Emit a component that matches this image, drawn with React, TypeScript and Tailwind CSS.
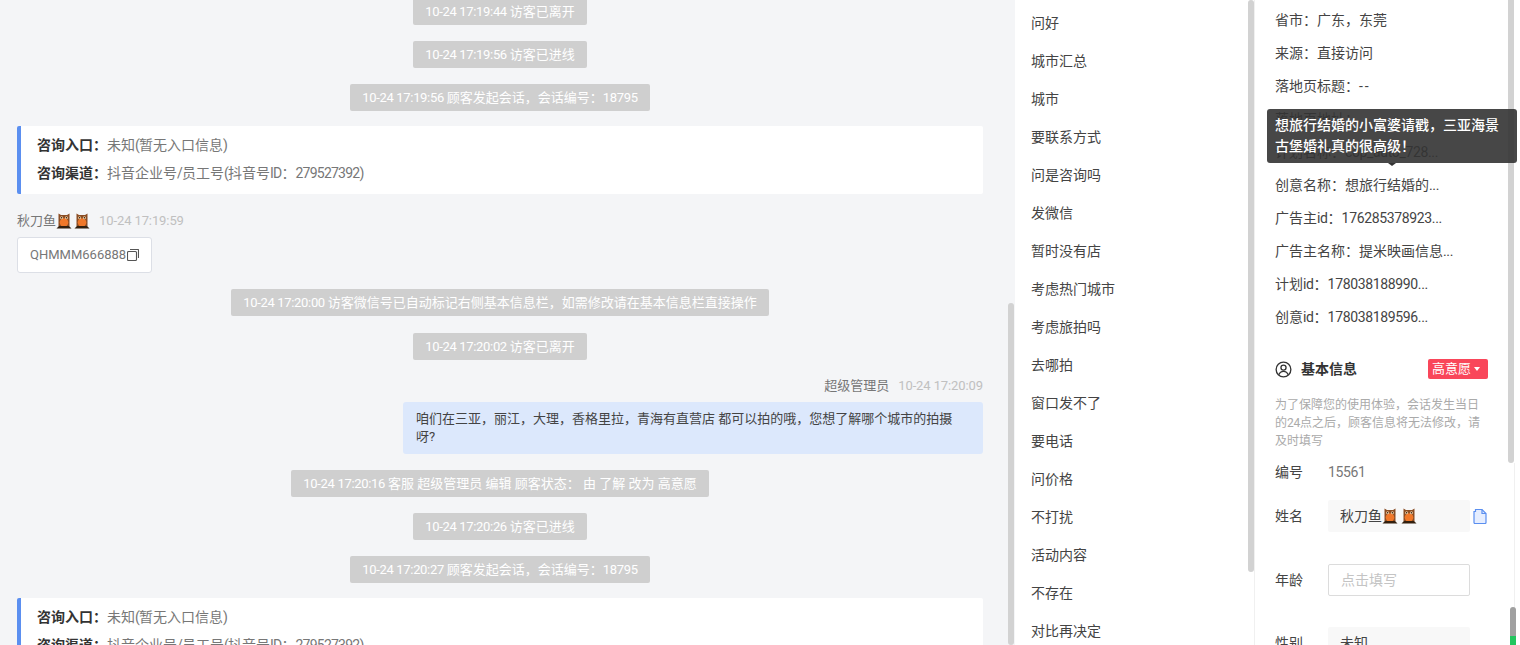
import type { ReactNode } from "react";

const font = { fontFamily: 'Roboto, "Noto Sans CJK SC", sans-serif' };

function Mixed({ text, tight = false }: { text: string; tight?: boolean }) {
  const parts = text.split(/([\x00-\x7f]+)/).filter(Boolean);
  return (
    <>
      {parts.map((part, i) => {
        if (part === "--") return <span key={i} className="tracking-[2px]">{part}</span>;
        if (!/^[\x00-\x7f]/.test(part) || part.trim() === "") return <span key={i}>{part}</span>;
        return (
          <span key={i} className={tight ? "tracking-[-0.055em]" : "tracking-[-0.025em]"}>{part}</span>
        );
      })}
    </>
  );
}

function Owl() {
  return (
    <svg viewBox="0 0 16 16" className="inline-block w-[16px] h-[16px] align-[-3px]">
      <path d="M2.5 0.5l2.5 1.5h6l2.5-1.5v13h-11z" fill="#8a4d24" />
      <ellipse cx="8" cy="9.5" rx="4.3" ry="4.2" fill="#f0782a" />
      <circle cx="5.6" cy="4.8" r="1.5" fill="#f1cfa5" />
      <circle cx="10.4" cy="4.8" r="1.5" fill="#f1cfa5" />
      <circle cx="5.6" cy="4.8" r=".7" fill="#2a1a10" />
      <circle cx="10.4" cy="4.8" r=".7" fill="#2a1a10" />
      <path d="M0.5 15.5l2.5-2.5h10l2.5 2.5z" fill="#33200f" />
    </svg>
  );
}

function Notice({ children }: { children: string }) {
  return (
    <div className="flex justify-center">
      <div className="h-[27px] leading-[27px] px-3 bg-[#cfcfcf] text-white text-[13px] rounded-[2px] whitespace-pre">
        <Mixed text={children} />
      </div>
    </div>
  );
}

function EntryCard() {
  return (
    <div className="h-[68px] shrink-0 bg-white border-l-4 border-[#5b8ff0] rounded-[2px] pl-4 pt-[5px] text-[14px] leading-[28px] text-[#777]">
      <p><b className="text-[#333] font-bold">咨询入口：</b><Mixed text="未知(暂无入口信息)" tight /></p>
      <p><b className="text-[#333] font-bold">咨询渠道：</b><Mixed text="抖音企业号/员工号(抖音号ID：279527392)" tight /></p>
    </div>
  );
}

function Bar({ top, height }: { top: string; height: string }) {
  return <div className={`absolute left-[1px] w-[6px] rounded-[3px] bg-[#d2d2d2] ${top} ${height}`} />;
}

function Field({ label, children }: { label: string; children: ReactNode }) {
  return (
    <div className="flex items-center">
      <span className="w-[53px]">{label}</span>
      {children}
    </div>
  );
}

const phrases = ["问好", "城市汇总", "城市", "要联系方式", "问是咨询吗", "发微信", "暂时没有店", "考虑热门城市", "考虑旅拍吗", "去哪拍", "窗口发不了", "要电话", "问价格", "不打扰", "活动内容", "不存在", "对比再决定"];

const infoRows = ["省市：广东，东莞", "来源：直接访问", "落地页标题：--", "落地页地址：", "计划名称：cop_auto_728...", "创意名称：想旅行结婚的...", "广告主id：176285378923...", "广告主名称：提米映画信息...", "计划id：178038188990...", "创意id：178038189596..."];

export default function App() {
  return (
    <div className="relative h-[645px] w-[1520px] flex overflow-hidden bg-white" style={font}>
      {/* chat */}
      <div className="w-[1007px] shrink-0 bg-[#f4f5f7] h-full overflow-hidden">
        <div className="-mt-[2px] pl-[17px] pr-6 flex flex-col">
          <Notice>10-24 17:19:44 访客已离开</Notice>
          <div className="h-4 shrink-0" />
          <Notice>10-24 17:19:56 访客已进线</Notice>
          <div className="h-4 shrink-0" />
          <Notice>10-24 17:19:56 顾客发起会话，会话编号：18795</Notice>
          <div className="h-[15px] shrink-0" />
          <EntryCard />
          <div className="mt-[17px] h-5 flex items-center text-[13px] text-[#777]">
            <span>秋刀鱼</span><Owl /><span className="w-[2px]" /><Owl />
            <span className="ml-[9px] text-[#c0c0c0] tracking-[-0.1px]">10-24 17:19:59</span>
          </div>
          <div className="mt-[6px] self-start h-9 flex items-center px-3 bg-white border border-[#dcdfe6] rounded-[3px] text-[13px] text-[#777]">
            QHMMM666888
            <svg viewBox="0 0 12 12" className="w-3 h-3 ml-[1px]" fill="none" stroke="#555" strokeWidth="1.1">
              <rect x=".5" y="2.5" width="9" height="9" rx="1" />
              <path d="M3 .5h8a.5.5 0 0 1 .5.5v8" />
            </svg>
          </div>
          <div className="h-4 shrink-0" />
          <Notice>10-24 17:20:00 访客微信号已自动标记右侧基本信息栏，如需修改请在基本信息栏直接操作</Notice>
          <div className="h-[17px] shrink-0" />
          <Notice>10-24 17:20:02 访客已离开</Notice>
          <div className="mt-4 h-5 flex justify-end items-center text-[13px] text-[#777]">
            超级管理员<span className="ml-[9px] text-[#c0c0c0] tracking-[-0.1px]">10-24 17:20:09</span>
          </div>
          <div className="mt-[6px] self-end w-[580px] h-[52px] px-[13px] py-2 bg-[#dce8fc] rounded-[3px] text-[13px] leading-[18px] text-[#444]">
            咱们在三亚，丽江，大理，香格里拉，青海有直营店 都可以拍的哦，您想了解哪个城市的拍摄呀?
          </div>
          <div className="h-4 shrink-0" />
          <Notice>10-24 17:20:16 客服 超级管理员 编辑 顾客状态： 由 了解 改为 高意愿</Notice>
          <div className="h-4 shrink-0" />
          <Notice>10-24 17:20:26 访客已进线</Notice>
          <div className="h-4 shrink-0" />
          <Notice>10-24 17:20:27 顾客发起会话，会话编号：18795</Notice>
          <div className="h-[15px] shrink-0" />
          <EntryCard />
        </div>
      </div>
      <div className="relative w-[8px] shrink-0 bg-[#f4f5f7]">
        <Bar top="top-[303px]" height="h-[342px]" />
      </div>
      {/* phrases */}
      <div className="w-[232px] shrink-0 bg-white overflow-hidden pl-4 pt-[4px] text-[14px] text-[#444]">
        {phrases.map((p) => (
          <div key={p} className="h-[38px] leading-[38px]">{p}</div>
        ))}
      </div>
      <div className="relative w-[7px] shrink-0 bg-white">
        <Bar top="top-0" height="h-[572px]" />
      </div>
      {/* info */}
      <div className="w-[254px] shrink-0 bg-white border-l border-[#f0f0f0] text-[14px] text-[#444] pl-5 overflow-hidden">
        <div className="mt-[4px]">
          {infoRows.map((r) => (
            <div key={r} className="h-[33px] leading-[33px] whitespace-nowrap"><Mixed text={r} /></div>
          ))}
        </div>
        <div className="mt-[25px] pr-5 flex items-center h-5">
          <svg viewBox="0 0 18 18" className="w-[17px] h-[17px]" fill="none" stroke="#333" strokeWidth="1.4">
            <circle cx="9" cy="9" r="7.8" />
            <circle cx="9" cy="7" r="2.7" />
            <path d="M4 14.5c1-2.6 2.8-3.6 5-3.6s4 1 5 3.6" />
          </svg>
          <span className="ml-[9px] font-bold text-[#333]">基本信息</span>
          <span className="ml-auto h-5 w-[60px] rounded-[2px] bg-[#f9465a] text-white text-[13px] leading-5 pl-1 flex items-center">
            高意愿
            <span className="ml-[3px] w-0 h-0 border-x-[3.5px] border-x-transparent border-t-[4px] border-t-white" />
          </span>
        </div>
        <p className="mt-[17px] mr-5 text-[12px] leading-[18px] text-[#aaa]">
          为了保障您的使用体验，会话发生当日的<Mixed text="24" />点之后，顾客信息将无法修改，请及时填写
        </p>
        <div className="mt-[6px] h-8">
          <Field label="编号">
            <span className="leading-8 text-[#777]"><Mixed text="15561" /></span>
          </Field>
        </div>
        <div className="mt-[12px]">
          <Field label="姓名">
            <div className="w-[142px] h-8 bg-[#f8f8f8] rounded-[2px] pl-3 leading-8 whitespace-nowrap">
              秋刀鱼<Owl /><span className="inline-block w-[3px]" /><Owl />
            </div>
            <svg viewBox="0 0 14 16" className="ml-[3px] w-[14px] h-4" fill="#e6eeff" stroke="#5b8ff0" strokeWidth="1.2">
              <path d="M1 3.5h1.5v-2h6.5l4 4v9a1 1 0 0 1-1 1H2a1 1 0 0 1-1-1z" />
              <path d="M9 1.5v4h4" fill="none" />
            </svg>
          </Field>
        </div>
        <div className="mt-[32px]">
          <Field label="年龄">
            <div className="w-[142px] h-8 border border-[#dcdcdc] rounded-[2px] pl-3 leading-[30px] text-[#c4c4c4]">点击填写</div>
          </Field>
        </div>
        <div className="mt-[31px]">
          <Field label="性别">
            <div className="w-[142px] h-8 bg-[#f8f8f8] rounded-[2px] pl-3 leading-8">未知</div>
          </Field>
        </div>
      </div>
      {/* page scrollbar */}
      <div className="relative flex-1 bg-white">
        <div className="absolute left-0 top-0 w-[6px] h-[463px] rounded-b-[3px] bg-[#d2d2d2]" />
        <div className="absolute left-[6px] top-[463px] bottom-0 w-px bg-[#f0f0f0]" />
        <div className="absolute left-[2px] top-[607px] w-[6px] h-[38px] rounded-t-[3px] bg-[#a0a0a0]" />
        <div className="absolute left-[2px] top-[636px] w-[6px] h-[9px] bg-[#22c55e]" />
      </div>
      {/* tooltip */}
      <div className="absolute left-[1267px] top-[109px] w-[250px] h-[54px] rounded-[3px] bg-[#333]/90 px-2 py-[6px] text-[14px] font-medium leading-[21px] text-white">
        想旅行结婚的小富婆请戳，三亚海景古堡婚礼真的很高级！
        <span className="absolute left-[121px] -bottom-[3px] w-0 h-0 border-x-[4px] border-x-transparent border-t-[3px] border-t-[#333]" />
      </div>
    </div>
  );
}
